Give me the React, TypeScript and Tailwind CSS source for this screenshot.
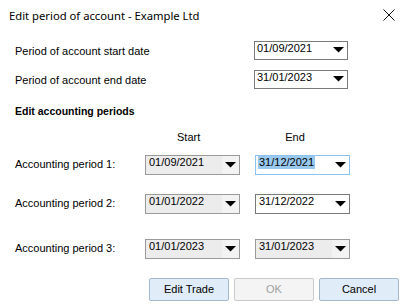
import React from "react";

type Variant = "white" | "gray" | "focused";

function Arrow() {
  return (
    <svg width="11" height="6" viewBox="0 0 11 6" className="block">
      <polygon points="0,0 11,0 5.5,5.5" fill="#000" />
    </svg>
  );
}

function DateBox({
  value,
  variant,
  w,
  pl,
}: {
  value: string;
  variant: Variant;
  w: string;
  pl: string;
}) {
  const box =
    variant === "gray"
      ? "bg-[#ececec] border-[#9a9a9a]"
      : variant === "focused"
      ? "bg-white border-[#8cc2f0]"
      : "bg-white border-[#7a7a7a]";
  return (
    <div className={`${w} ${box} flex h-full border`}>
      <div className={`flex-1 ${pl} leading-[13px] text-[11px] text-black`}>
        {variant === "focused" ? (
          <span className="inline-block bg-[#99c9ef] pl-[1px] pr-[1px]">{value}</span>
        ) : (
          value
        )}
      </div>
      <div
        className={`flex w-[17px] items-center justify-center pb-[1px] ${
          variant === "gray" ? "bg-[#f3f3f3]" : ""
        }`}
      >
        <Arrow />
      </div>
    </div>
  );
}

function Btn({ label, disabled }: { label: string; disabled?: boolean }) {
  return (
    <div
      className={`flex h-[23px] w-[80px] items-center justify-center rounded-[2px] border text-[11px] ${
        disabled
          ? "border-[#cacaca] bg-[#f4f4f4] text-[#a0a0a0]"
          : "border-[#a4b8d0] bg-[#e1ecf9] text-black"
      }`}
    >
      {label}
    </div>
  );
}

export default function App() {
  return (
    <div
      className="h-[305px] w-[402px] overflow-hidden bg-white text-black"
      style={{ fontFamily: '"Liberation Sans", Arial, sans-serif' }}
    >
      {/* title bar */}
      <div className="flex items-start justify-between pl-[9px] pr-[7px] pt-[8px]">
        <div
          className="text-[11.25px] leading-[15px] text-black"
          style={{ fontFamily: '"Noto Sans", sans-serif' }}
        >
          Edit period of account - Example Ltd
        </div>
        <svg width="12" height="12" viewBox="0 0 12 12" className="mt-[1px] block">
          <path d="M0.5 0.5 L11.5 11.5 M11.5 0.5 L0.5 11.5" stroke="#111" strokeWidth="1" />
        </svg>
      </div>

      {/* period of account rows */}
      <div className="mt-[18px] flex h-[19px] items-start pl-[15px]">
        <div className="w-[239px] pt-[4px] text-[11px] leading-[13px]">
          Period of account start date
        </div>
        <DateBox value="01/09/2021" variant="white" w="w-[94px]" pl="pl-[2px]" />
      </div>
      <div className="mt-[10px] flex h-[19px] items-start pl-[15px]">
        <div className="w-[239px] pt-[4px] text-[11px] leading-[13px]">
          Period of account end date
        </div>
        <DateBox value="31/01/2023" variant="white" w="w-[94px]" pl="pl-[2px]" />
      </div>

      {/* heading */}
      <div className="mt-[16px] pl-[15px] text-[10.5px] font-bold leading-[13px]">
        Edit accounting periods
      </div>

      {/* column headers */}
      <div className="mt-[13px] flex text-[11px] leading-[13px]">
        <div className="ml-[177px]">Start</div>
        <div className="ml-[85px]">End</div>
      </div>

      {/* rows */}
      <div className="mt-[11px] flex h-[20px] items-start pl-[15px]">
        <div className="w-[130px] pt-[3px] text-[11px] leading-[13px]">Accounting period 1:</div>
        <DateBox value="01/09/2021" variant="gray" w="w-[95px]" pl="pl-[3px]" />
        <div className="w-[15px]" />
        <DateBox value="31/12/2021" variant="focused" w="w-[95px]" pl="pl-[2px]" />
      </div>
      <div className="mt-[19px] flex h-[20px] items-start pl-[15px]">
        <div className="w-[130px] pt-[3px] text-[11px] leading-[13px]">Accounting period 2:</div>
        <DateBox value="01/01/2022" variant="gray" w="w-[95px]" pl="pl-[3px]" />
        <div className="w-[15px]" />
        <DateBox value="31/12/2022" variant="white" w="w-[95px]" pl="pl-[3px]" />
      </div>
      <div className="mt-[25px] flex h-[20px] items-start pl-[15px]">
        <div className="w-[130px] pt-[3px] text-[11px] leading-[13px]">Accounting period 3:</div>
        <DateBox value="01/01/2023" variant="gray" w="w-[95px]" pl="pl-[3px]" />
        <div className="w-[15px]" />
        <DateBox value="31/01/2023" variant="gray" w="w-[95px]" pl="pl-[3px]" />
      </div>

      {/* buttons */}
      <div className="mt-[19px] flex gap-[5px] pl-[149px]">
        <Btn label="Edit Trade" />
        <Btn label="OK" disabled />
        <Btn label="Cancel" />
      </div>
    </div>
  );
}
